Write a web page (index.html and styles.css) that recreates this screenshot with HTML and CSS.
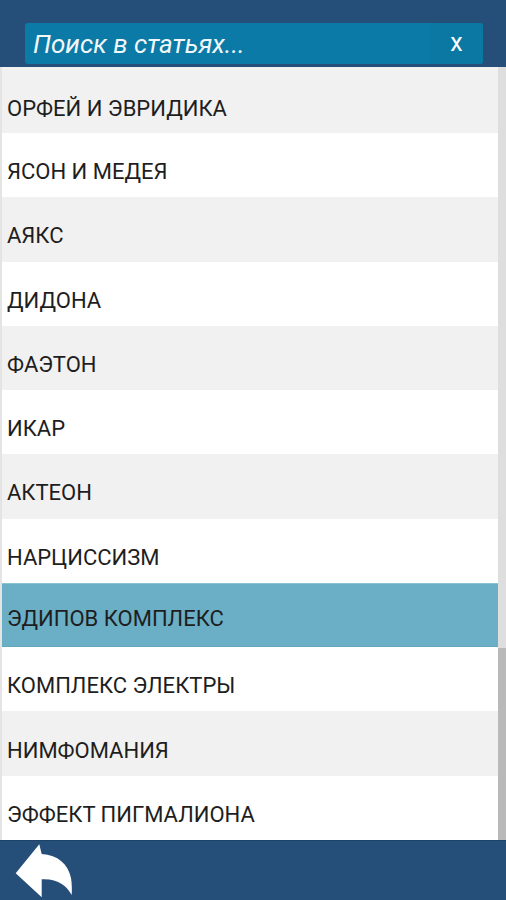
FILE: index.html
```html
<!doctype html>
<html>
<head>
    <meta charset="utf-8">
    <title>Мифы</title>
    <meta name="viewport" content="width=device-width, initial-scale=1" />
    <link rel="stylesheet" href="styles.css">
</head>
<body>
<div class="screen">
    <div class="topbar">
        <div class="search">
            <span class="search-text">Поиск в статьях...</span>
            <span class="search-clear">x</span>
        </div>
    </div>
    <div class="content">
        <ul class="list">
            <li class="item">ОРФЕЙ И ЭВРИДИКА</li>
            <li class="item">ЯСОН И МЕДЕЯ</li>
            <li class="item">АЯКС</li>
            <li class="item">ДИДОНА</li>
            <li class="item">ФАЭТОН</li>
            <li class="item">ИКАР</li>
            <li class="item">АКТЕОН</li>
            <li class="item">НАРЦИССИЗМ</li>
            <li class="item selected">ЭДИПОВ КОМПЛЕКС</li>
            <li class="item">КОМПЛЕКС ЭЛЕКТРЫ</li>
            <li class="item">НИМФОМАНИЯ</li>
            <li class="item">ЭФФЕКТ ПИГМАЛИОНА</li>
        </ul>
        <div class="scroll-track"><div class="scroll-thumb"></div></div>
    </div>
    <div class="bottombar">
        <svg class="back" width="70" height="60" viewBox="0 0 70 60">
            <path d="M5.7 33.3 L29.3 4.3 L31.7 14 C48 15 58 24 61 38 C62 44 62 50 61.7 55 C57 46 48 38.5 31.7 39.3 L31.7 57.3 Z" fill="#ffffff" />
        </svg>
    </div>
</div>
</body>
</html>
```

FILE: styles.css
```css
* { box-sizing: border-box; }

html, body {
    margin: 0;
    padding: 0;
}

body {
    font-family: Roboto, "Noto Sans", sans-serif;
    background: #254e79;
}

.screen {
    display: flex;
    flex-direction: column;
    width: 506px;
    height: 900px;
}

.topbar {
    height: 67px;
    padding: 23px 23px 3px 25px;
    background: #254e79;
}

.search {
    display: flex;
    align-items: center;
    height: 41px;
    background: #0b7aa6;
    border-radius: 3px;
    color: #ffffff;
}

.search-text {
    flex: 1;
    padding-left: 8px;
    font-size: 26px;
    font-style: italic;
    opacity: 0.95;
}

.search-clear {
    width: 53px;
    height: 100%;
    display: flex;
    align-items: center;
    justify-content: center;
    font-size: 25px;
    padding-bottom: 3px;
    background: #0a78a3;
    border-radius: 0 3px 3px 0;
}

.content {
    flex: 1;
    display: flex;
    background: #ffffff;
    border-left: 2px solid #e4e4e4;
}

.list {
    flex: 1;
    margin: 0;
    padding: 0;
    list-style: none;
}

.item {
    height: 64.27px;
    padding: 13px 0 0 5px;
    display: flex;
    align-items: center;
    font-size: 22px;
    color: #1e1e1e;
    background: #ffffff;
}

.item:first-child {
    height: 66px;
    padding-top: 16px;
}

.item:nth-child(odd) {
    background: #f1f1f1;
}

.item.selected {
    background: #6aafc5;
    border-top: 1px solid #8cc3d4;
    border-bottom: 1px solid #64a6bb;
    padding-top: 8px;
}

.scroll-track {
    width: 8px;
    display: flex;
    flex-direction: column;
    justify-content: flex-end;
    background: #dedede;
}

.scroll-thumb {
    height: 192px;
    background: #b9b9b9;
}

.bottombar {
    height: 60px;
    padding-left: 10px;
    background: #254e79;
    border-top: 1px solid #1d4268;
}

.back {
    display: block;
    margin-top: -1px;
}
```
